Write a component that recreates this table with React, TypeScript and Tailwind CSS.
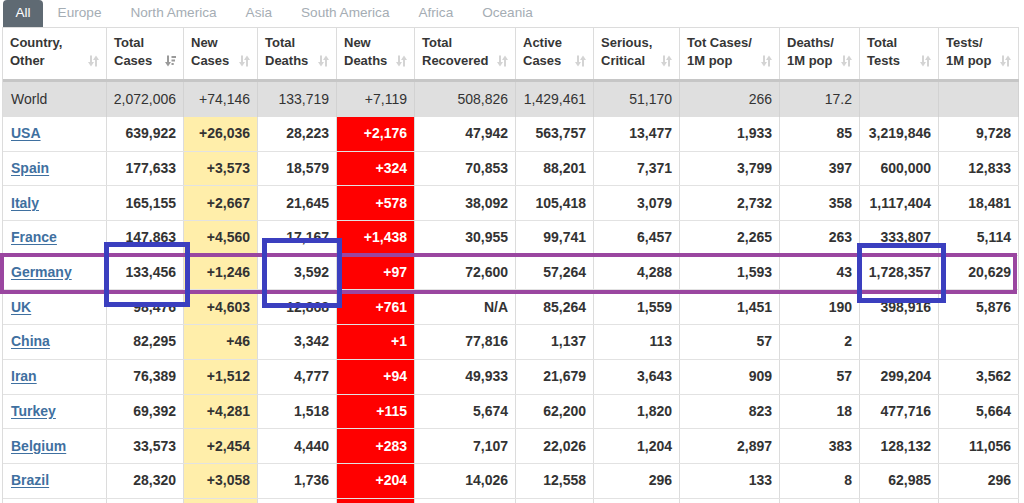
import React from "react";

const cols = "grid grid-cols-[104px_77px_74px_79px_78px_101px_78px_86px_100px_80px_79px_80px]";

function SortIcon({ active = false }: { active?: boolean }) {
  if (active) {
    return (
      <svg width="11" height="12" viewBox="0 0 11 12" className="shrink-0">
        <rect x="2" y="0.5" width="2" height="7.5" fill="#9a9a9a" />
        <polygon points="0,7 6,7 3,11.5" fill="#9a9a9a" />
        <rect x="6.5" y="1" width="4.5" height="2" fill="#9a9a9a" />
        <rect x="6.5" y="4.5" width="3.5" height="2" fill="#9a9a9a" />
        <rect x="6.5" y="8" width="2.2" height="2" fill="#9a9a9a" />
      </svg>
    );
  }
  return (
    <svg width="11" height="12" viewBox="0 0 11 12" className="shrink-0">
      <rect x="2" y="0.5" width="2" height="7.5" fill="#d4d4d4" />
      <polygon points="0,7 6,7 3,11.5" fill="#d4d4d4" />
      <rect x="7" y="4" width="2" height="7.5" fill="#d4d4d4" />
      <polygon points="5,5 11,5 8,0.5" fill="#d4d4d4" />
    </svg>
  );
}

const headers: [string, string, boolean][] = [
  ["Country,", "Other", false],
  ["Total", "Cases", true],
  ["New", "Cases", false],
  ["Total", "Deaths", false],
  ["New", "Deaths", false],
  ["Total", "Recovered", false],
  ["Active", "Cases", false],
  ["Serious,", "Critical", false],
  ["Tot Cases/", "1M pop", false],
  ["Deaths/", "1M pop", false],
  ["Total", "Tests", false],
  ["Tests/", "1M pop", false],
];

const rows: string[][] = [
  ["USA", "639,922", "+26,036", "28,223", "+2,176", "47,942", "563,757", "13,477", "1,933", "85", "3,219,846", "9,728"],
  ["Spain", "177,633", "+3,573", "18,579", "+324", "70,853", "88,201", "7,371", "3,799", "397", "600,000", "12,833"],
  ["Italy", "165,155", "+2,667", "21,645", "+578", "38,092", "105,418", "3,079", "2,732", "358", "1,117,404", "18,481"],
  ["France", "147,863", "+4,560", "17,167", "+1,438", "30,955", "99,741", "6,457", "2,265", "263", "333,807", "5,114"],
  ["Germany", "133,456", "+1,246", "3,592", "+97", "72,600", "57,264", "4,288", "1,593", "43", "1,728,357", "20,629"],
  ["UK", "98,476", "+4,603", "12,868", "+761", "N/A", "85,264", "1,559", "1,451", "190", "398,916", "5,876"],
  ["China", "82,295", "+46", "3,342", "+1", "77,816", "1,137", "113", "57", "2", "", ""],
  ["Iran", "76,389", "+1,512", "4,777", "+94", "49,933", "21,679", "3,643", "909", "57", "299,204", "3,562"],
  ["Turkey", "69,392", "+4,281", "1,518", "+115", "5,674", "62,200", "1,820", "823", "18", "477,716", "5,664"],
  ["Belgium", "33,573", "+2,454", "4,440", "+283", "7,107", "22,026", "1,204", "2,897", "383", "128,132", "11,056"],
  ["Brazil", "28,320", "+3,058", "1,736", "+204", "14,026", "12,558", "296", "133", "8", "62,985", "296"],
  ["", "", "", "", "", "", "", "", "", "", "", ""],
];

const world = ["World", "2,072,006", "+74,146", "133,719", "+7,119", "508,826", "1,429,461", "51,170", "266", "17.2", "", ""];

const tabs = ["Europe", "North America", "Asia", "South America", "Africa", "Oceania"];

export default function App() {
  return (
    <div
      className="relative w-[1024px] h-[503px] overflow-hidden bg-white text-[#333]"
      style={{ fontFamily: '"Liberation Sans", Arial, sans-serif' }}
    >
      {/* Tabs */}
      <div className="flex h-[27px] items-stretch pl-[3px] text-[13.6px]">
        <div className="flex items-center rounded-t-[4px] bg-[#5f6a73] px-[12.5px] text-white">All</div>
        {tabs.map((t) => (
          <div key={t} className="flex items-center px-[14.5px] text-[#a5adb4]">
            {t}
          </div>
        ))}
      </div>

      {/* Table */}
      <div className="ml-[2px] w-[1017px] border-l border-[#dcdcdc]">
        {/* Header */}
        <div className={`${cols} h-[55px] border-t border-b-[3px] border-t-[#dcdcdc] border-b-[#c6c6c6]`}>
          {headers.map(([a, b, act], i) => (
            <div
              key={i}
              className="flex flex-col border-r border-[#dcdcdc] pl-[7px] pr-[7px] pt-[6px] text-[13px] font-bold leading-[18px] text-[#363636]"
            >
              <div>{a}</div>
              <div className="flex items-center justify-between">
                <span>{b}</span>
                <SortIcon active={act} />
              </div>
            </div>
          ))}
        </div>

        {/* World row */}
        <div className={`${cols} h-[35px] bg-[#dfdfdf] text-[14px]`}>
          {world.map((v, i) => (
            <div
              key={i}
              className={`flex items-center border-r border-[#d2d2d2] ${
                i === 0 ? "pl-[8px] justify-start" : "pr-[7px] justify-end"
              }`}
            >
              {v}
            </div>
          ))}
        </div>

        {/* Data rows */}
        {rows.map((r, ri) => (
          <div key={ri} className={`${cols} h-[34.7px] border-b border-[#e2e2e2] text-[14px] font-bold`}>
            {r.map((v, i) => {
              if (i === 0) {
                return (
                  <div key={i} className="flex items-center border-r border-[#dcdcdc] pl-[8px]">
                    <a className="text-[#3f70a0] underline underline-offset-[2px]">{v}</a>
                  </div>
                );
              }
              const bg =
                i === 2 ? "bg-[#ffeeaa]" : i === 4 ? "bg-[#ff0000] text-white" : "";
              return (
                <div
                  key={i}
                  className={`flex items-center justify-end border-r border-[#dcdcdc] pr-[7px] ${bg}`}
                >
                  {v}
                </div>
              );
            })}
          </div>
        ))}
      </div>

      {/* Annotations */}
      <div className="pointer-events-none absolute left-0 top-[253px] h-[41px] w-[1017px] border-[4.5px] border-[#9a46a0]" />
      <div className="pointer-events-none absolute left-[104px] top-[242px] h-[65px] w-[86px] border-[5px] border-[#3b3fbf]" />
      <div className="pointer-events-none absolute left-[262px] top-[238px] h-[70px] w-[80px] border-[5px] border-[#3b3fbf]" />
      <div className="pointer-events-none absolute left-[857px] top-[243px] h-[60px] w-[89px] border-[5px] border-[#3b3fbf]" />
    </div>
  );
}
